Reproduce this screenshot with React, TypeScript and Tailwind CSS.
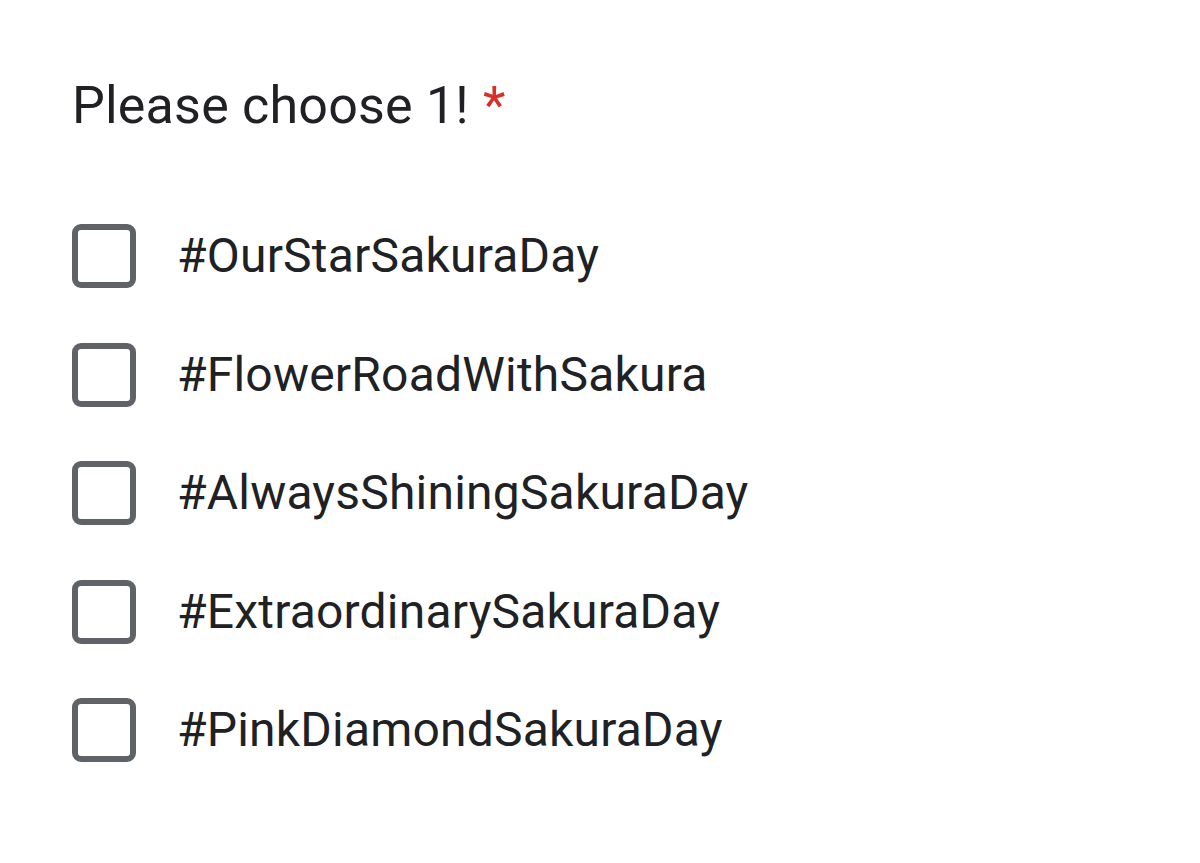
const options = [
  "#OurStarSakuraDay",
  "#FlowerRoadWithSakura",
  "#AlwaysShiningSakuraDay",
  "#ExtraordinarySakuraDay",
  "#PinkDiamondSakuraDay",
];

export default function App() {
  return (
    <div className="h-[863px] w-[1200px] bg-white pl-[72px] pt-[76px] text-[#202124] [font-family:Roboto,'Liberation_Sans',sans-serif]">
      <h1 className="flex items-start text-[52px] leading-[60px] font-normal tracking-[0.2px]">
        <span>Please choose 1!</span>
        <span className="ml-[14px] text-[#d93025]">*</span>
      </h1>
      <div className="mt-[88px] flex flex-col gap-[54.5px]">
        {options.map((item) => (
          <label key={item} className="flex h-[64px] items-center">
            <span className="size-[64px] shrink-0 rounded-[9px] border-[6px] border-[#5f6368] bg-white" />
            <span className="ml-[41px] text-[48px] leading-none tracking-[0.2px]">{item}</span>
          </label>
        ))}
      </div>
    </div>
  );
}
